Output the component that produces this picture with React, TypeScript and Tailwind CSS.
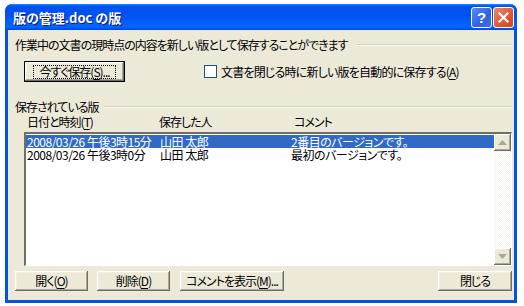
import React from "react";

const font = {
  fontFamily: '"Noto Sans CJK JP", "Noto Sans", sans-serif',
  fontFeatureSettings: '"palt"',
  letterSpacing: "-1px",
} as React.CSSProperties;

function Btn({ children, className = "" }: { children: React.ReactNode; className?: string }) {
  return (
    <div
      className={`flex items-center justify-center h-[20px] bg-[#ECE9D8] text-[12px] leading-none text-black whitespace-nowrap shadow-[inset_-1px_-1px_#716F64,inset_1px_1px_#FFFFFF,inset_-2px_-2px_#ACA899,inset_2px_2px_#F1EFE2] ${className}`}
    >
      {children}
    </div>
  );
}

function U({ children }: { children: React.ReactNode }) {
  return <span className="underline underline-offset-2">{children}</span>;
}

function Arrow({ up }: { up: boolean }) {
  return (
    <div className="w-[17px] h-[17px] flex items-center justify-center bg-[#ECE9D8] shadow-[inset_-1px_-1px_#716F64,inset_1px_1px_#FFFFFF,inset_-2px_-2px_#ACA899]">
      <svg width="9" height="5" viewBox="0 0 9 5">
        {up ? <polygon points="4.5,0 9,5 0,5" fill="#ACA899" /> : <polygon points="0,0 9,0 4.5,5" fill="#ACA899" />}
      </svg>
    </div>
  );
}

export default function App() {
  return (
    <div className="w-[524px] h-[306px] bg-white pl-[5px] pt-[4px]" style={font}>
      <div className="w-[512px] h-[299px] flex flex-col rounded-t-[7px] bg-[#0054E3] overflow-hidden">
        {/* title bar */}
        <div className="h-[26px] shrink-0 flex items-center pl-[8px] pr-[3px] bg-[linear-gradient(180deg,#0997FF_0%,#0053EE_8%,#0050EE_40%,#0066FF_88%,#0047D6_100%)]">
          <div className="flex-1 text-white font-bold text-[13px] leading-none tracking-normal whitespace-nowrap [text-shadow:1px_1px_#0A1883]">
            版の管理.doc の版
          </div>
          <div className="flex gap-[1px] mt-[1px]">
            <div
              className="w-[21px] h-[21px] rounded-[3px] border border-white bg-[linear-gradient(135deg,#5A8CF0,#2E63E0_60%,#3B6FE6)] flex items-center justify-center text-white font-bold text-[15px] leading-none"
              style={{ fontFamily: '"Liberation Sans", sans-serif', letterSpacing: 0 }}
            >
              ?
            </div>
            <div className="w-[21px] h-[21px] rounded-[3px] border border-white bg-[linear-gradient(135deg,#F08A68,#E0552F_60%,#D44420)] flex items-center justify-center">
              <svg width="11" height="11" viewBox="0 0 11 11">
                <path d="M1.5 1.5 L9.5 9.5 M9.5 1.5 L1.5 9.5" stroke="white" strokeWidth="2.2" strokeLinecap="square" />
              </svg>
            </div>
          </div>
        </div>
        {/* body */}
        <div className="flex-1 mx-[3px] mb-[3px] bg-[#ECE9D8] flex flex-col text-[12px] leading-none text-black whitespace-nowrap pl-[7px] pr-[2px]">
          <div className="flex items-center mt-[8px] h-[14px]">
            <span>作業中の文書の現時点の内容を新しい版として保存することができます</span>
            <div className="flex-1 ml-[10px] h-[2px] border-t border-[#D0D0BF] border-b border-b-white" />
          </div>
          <div className="flex items-center mt-[9px] h-[21px]">
            <div className="ml-[9px] w-[101px] h-[21px] border border-black">
              <Btn className="w-full h-full">
                <div className="border border-dotted border-black px-[5px] h-[14px] flex items-center">
                  今すぐ保存(<U>S</U>)...
                </div>
              </Btn>
            </div>
            <div className="ml-[79px] w-[13px] h-[13px] bg-white border border-[#1C5180]" />
            <span className="ml-[4px] tracking-[-0.8px]">文書を閉じる時に新しい版を自動的に保存する(<U>A</U>)</span>
          </div>
          <div className="flex items-center mt-[18px] h-[14px]">
            <span>保存されている版</span>
            <div className="flex-1 ml-[6px] h-[2px] border-t border-[#D0D0BF] border-b border-b-white" />
          </div>
          <div className="flex items-center mt-[1px] h-[14px] pl-[12px]">
            <span className="w-[132px]">日付と時刻(<U>T</U>)</span>
            <span className="w-[135px]">保存した人</span>
            <span>コメント</span>
          </div>
          <div className="ml-[9px] mt-[3px] w-[488px] h-[134px] flex border-t-2 border-l-2 border-t-[#716F64] border-l-[#716F64] border-b border-r border-b-white border-r-white bg-white">
            <div className="flex-1 flex flex-col pt-[1px] tracking-[-0.5px] leading-[13px]">
              <div className="flex items-center h-[13px] bg-[#316AC5] text-white pl-[1px]">
                <span className="w-[133px]">2008/03/26 午後3時15分</span>
                <span className="w-[131px]">山田 太郎</span>
                <span>2番目のバージョンです。</span>
              </div>
              <div className="flex items-center h-[13px] pl-[1px]">
                <span className="w-[133px]">2008/03/26 午後3時0分</span>
                <span className="w-[131px]">山田 太郎</span>
                <span>最初のバージョンです。</span>
              </div>
            </div>
            <div className="w-[17px] flex flex-col bg-[repeating-conic-gradient(#F4F3EE_0%_25%,#FFFFFF_0%_50%)] bg-[length:2px_2px]">
              <Arrow up />
              <div className="flex-1" />
              <Arrow up={false} />
            </div>
          </div>
          <div className="flex items-center mt-[5px]">
            <Btn className="w-[73px]">開く(<U>O</U>)</Btn>
            <Btn className="w-[73px] ml-[9px]">削除(<U>D</U>)</Btn>
            <Btn className="w-[104px] ml-[10px]">コメントを表示(<U>M</U>)...</Btn>
            <div className="flex-1" />
            <Btn className="w-[74px]">閉じる</Btn>
          </div>
        </div>
      </div>
    </div>
  );
}
